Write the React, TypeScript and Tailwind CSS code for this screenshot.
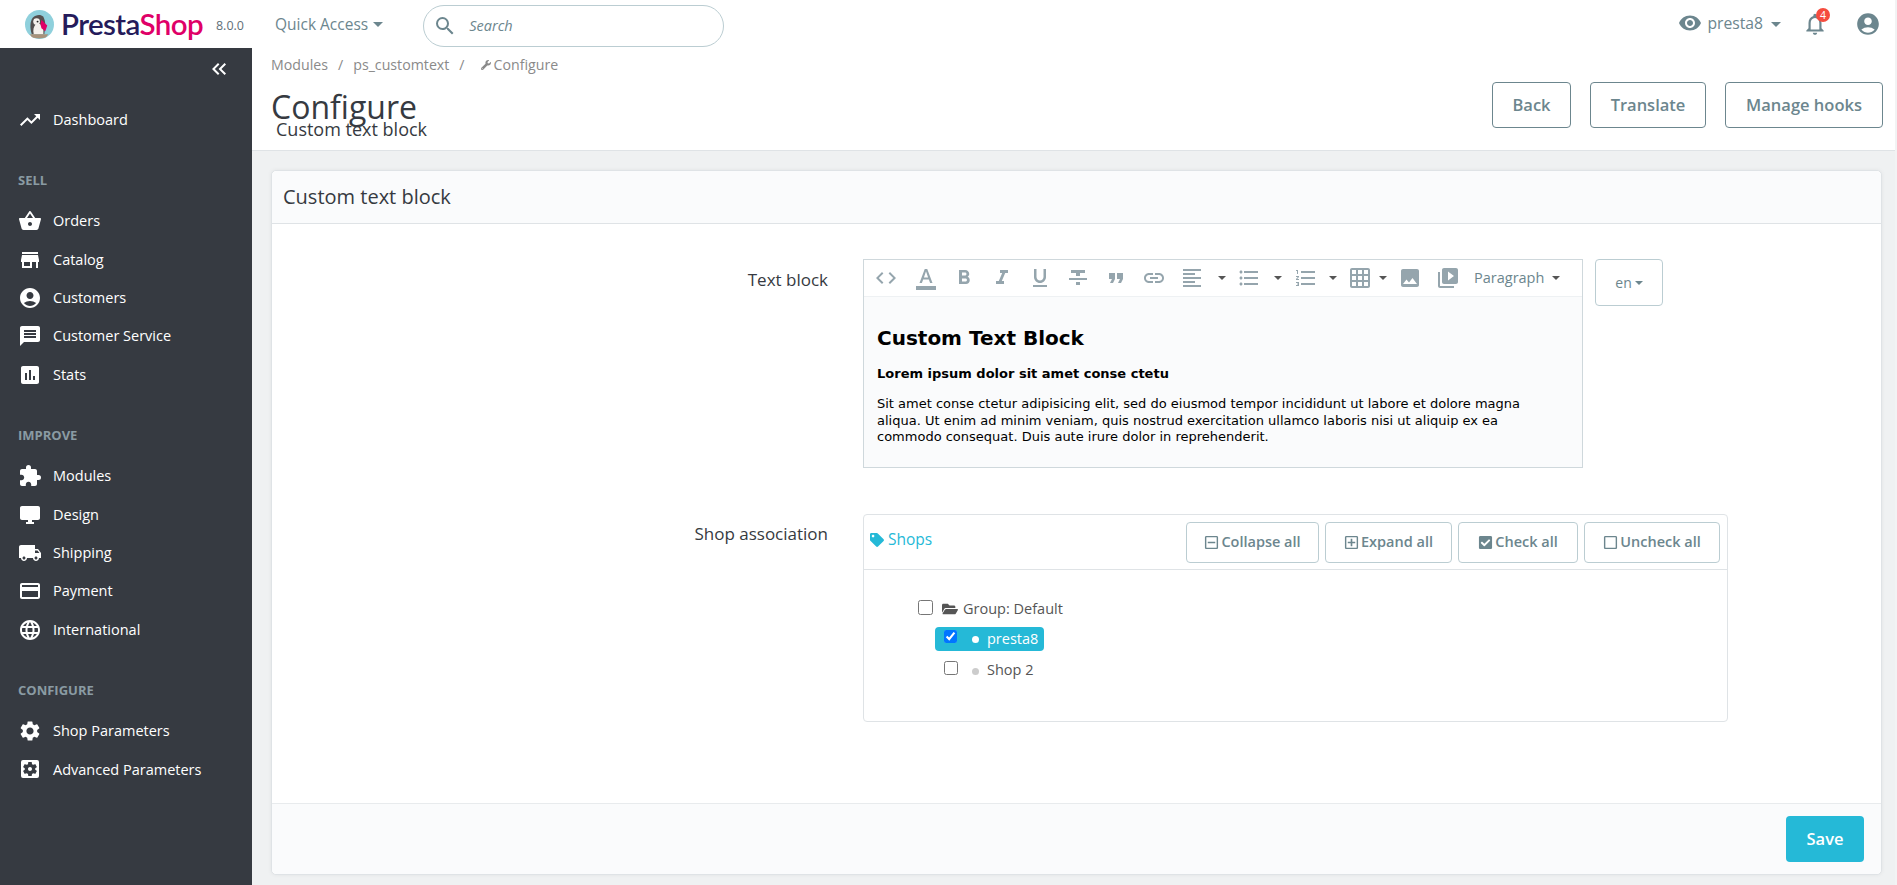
import {
  MdTrendingUp, MdShoppingBasket, MdStore, MdAccountCircle, MdMessage, MdAssessment, MdExtension,
  MdDesktopWindows, MdLocalShipping, MdPayment, MdLanguage, MdSettings, MdSettingsApplications,
  MdVisibility, MdNotificationsNone, MdSearch, MdCode, MdFormatColorText, MdFormatBold, MdFormatItalic,
  MdFormatUnderlined, MdFormatQuote, MdLink, MdFormatAlignLeft, MdFormatListBulleted,
  MdFormatListNumbered, MdGridOn, MdImage, MdVideoLibrary, MdKeyboardDoubleArrowLeft,
} from "react-icons/md";
import { FaTag, FaFolderOpen, FaRegMinusSquare, FaRegPlusSquare, FaCheckSquare, FaRegSquare, FaWrench } from "react-icons/fa";

const menu = [
  { title: "SELL", items: [["Orders", MdShoppingBasket], ["Catalog", MdStore], ["Customers", MdAccountCircle], ["Customer Service", MdMessage], ["Stats", MdAssessment]] },
  { title: "IMPROVE", items: [["Modules", MdExtension], ["Design", MdDesktopWindows], ["Shipping", MdLocalShipping], ["Payment", MdPayment], ["International", MdLanguage]] },
  { title: "CONFIGURE", items: [["Shop Parameters", MdSettings], ["Advanced Parameters", MdSettingsApplications]] },
] as const;

function Caret({ className = "" }: { className?: string }) {
  return <span className={`inline-block w-0 h-0 border-x-[4px] border-x-transparent border-t-[4px] ${className}`} />;
}

// material format_strikethrough, the md set only ships the S variant
function StrikeIcon({ style }: { style?: React.CSSProperties }) {
  return (
    <svg viewBox="0 0 24 24" width="1em" height="1em" fill="currentColor" style={style}>
      <path d="M10 19h4v-3h-4v3zM5 4v3h5v3h4V7h5V4H5zM3 14h18v-2H3v2z" />
    </svg>
  );
}

function Logo() {
  return (
    <svg width="29" height="29" viewBox="0 0 30 30" className="shrink-0">
      <circle cx="15" cy="15" r="15" fill="#8fd0dc" />
      <path d="M7 25c-2-6-2-13 1-17 3-3 8-4 11-1 1 2 2 5 2 9l-1 9z" fill="#55504f" />
      <path d="M9 25c-1-4 0-8 2-10 3-2 7 0 8 4v6z" fill="#f5f1ec" />
      <circle cx="12" cy="12" r="3.5" fill="#f5f1ec" />
      <circle cx="13" cy="12" r="1" fill="#222" />
      <path d="M17 10l6 6-2 6-4-3-1-4z" fill="#df0067" />
      <path d="M5 25h19l-2 3c-4 2-11 2-15 0z" fill="#a8927a" />
    </svg>
  );
}

function Header() {
  return (
    <header className="h-12 bg-white flex items-center shrink-0 relative">
      <div className="ml-[25px] flex items-center w-[250px]">
        <Logo />
        <span className="ml-[7px] text-[29.5px] leading-none font-semibold tracking-[-0.6px] font-['Lato',sans-serif]">
          <span className="text-[#251b5b]">Presta</span><span className="text-[#df0067]">Shop</span>
        </span>
        <span className="ml-[13px] mt-[4px] text-[12.5px] text-[#5f6f78]">8.0.0</span>
      </div>
      <div className="flex items-center gap-[5px] mt-[1px] text-[15.5px] text-[#6c868e]">
        Quick Access <Caret className="border-t-[#6c868e] border-x-[5px] border-t-[5px]" />
      </div>
      <div className="ml-[40px] mt-[3px] w-[301px] h-[42px] border border-[#bbcdd2] rounded-[21px] flex items-center pl-[9px] bg-white">
        <MdSearch className="text-[#6c868e] text-[24px]" />
        <span className="ml-[12px] text-[14.5px] italic text-[#6c868e]">Search</span>
      </div>
      <div className="ml-auto mr-[14px] flex items-center text-[#6c868e]">
        <MdVisibility className="text-[24px] -mt-[3px]" />
        <span className="ml-[5px] text-[15.7px]">presta8</span>
        <Caret className="ml-[8px] border-t-[#6c868e] border-x-[5px] border-t-[5px]" />
        <div className="relative ml-[21px]">
          <MdNotificationsNone className="text-[26px]" />
          <span className="absolute -top-[3px] left-[14px] w-[14px] h-[14px] rounded-full bg-[#f54c3e] text-white text-[10.5px] leading-[14px] text-center">4</span>
        </div>
        <MdAccountCircle className="ml-[27px] text-[26px]" />
      </div>
    </header>
  );
}

function Sidebar() {
  return (
    <aside className="w-[252px] shrink-0 bg-[#363a41] text-white flex flex-col">
      <div className="h-[40px] flex items-center justify-end pr-[21px] pt-[2px]">
        <MdKeyboardDoubleArrowLeft className="text-[24px]" />
      </div>
      <div className="flex items-center h-[38px] pl-[18px] mt-[13px] text-[14.5px]">
        <MdTrendingUp className="text-[24px] w-[24px]" />
        <span className="ml-[11px]">Dashboard</span>
      </div>
      {menu.map((group) => (
        <div key={group.title} className="mt-[22px]">
          <div className="h-[40px] mb-[1px] pl-[18px] flex items-center text-[13px] font-bold text-[#8a9ba3]">{group.title}</div>
          {group.items.map(([label, Icon]) => (
            <div key={label} className="flex items-center h-[38.4px] pl-[18px] text-[14.5px]">
              <Icon className="text-[24px] w-[24px]" />
              <span className="ml-[11px]">{label}</span>
            </div>
          ))}
        </div>
      ))}
    </aside>
  );
}

function ToolBtn({ icon: Icon, caret, width = 38 }: { icon: any; caret?: string; width?: number }) {
  return (
    <div style={{ width }} className="flex items-center text-[#95a5ad] shrink-0">
      <div className="w-[38px] flex justify-center shrink-0">
        <Icon style={{ fontSize: 24 }} />
      </div>
      {caret !== undefined && <Caret className={`border-t-[#555] ${caret}`} />}
    </div>
  );
}

function TextBlock() {
  return (
    <div className="flex">
      <div className="w-[720px] border border-[#cfd8dc] h-[209px] flex flex-col">
        <div className="h-[37px] shrink-0 flex items-center pl-[3px] border-b border-[#eef1f3] bg-white">
          <ToolBtn icon={MdCode} width={40} />
          <ToolBtn icon={MdFormatColorText} />
          <ToolBtn icon={MdFormatBold} />
          <ToolBtn icon={MdFormatItalic} />
          <ToolBtn icon={MdFormatUnderlined} />
          <ToolBtn icon={StrikeIcon} />
          <ToolBtn icon={MdFormatQuote} />
          <ToolBtn icon={MdLink} />
          <ToolBtn icon={MdFormatAlignLeft} caret="ml-[7px]" width={57} />
          <ToolBtn icon={MdFormatListBulleted} caret="ml-[6px]" width={57} />
          <ToolBtn icon={MdFormatListNumbered} caret="ml-[4px]" width={54} />
          <ToolBtn icon={MdGridOn} caret="" width={50} />
          <ToolBtn icon={MdImage} />
          <ToolBtn icon={MdVideoLibrary} />
          <div className="flex items-center text-[14.5px] text-[#6c868e] ml-[7px] -mt-[1px]">
            Paragraph <Caret className="ml-[8px] border-t-[#555]" />
          </div>
        </div>
        <div className="grow bg-[#fafbfc] pl-[13px] pr-[20px] pt-[29px] text-black font-['DejaVu_Sans',sans-serif] text-[13px] leading-[16.4px]">
          <h2 className="text-[20px] leading-[24px] font-bold">Custom Text Block</h2>
          <p className="mt-[16px] font-bold">Lorem ipsum dolor sit amet conse ctetu</p>
          <p className="mt-[14px]">Sit amet conse ctetur adipisicing elit, sed do eiusmod tempor incididunt ut labore et dolore magna aliqua. Ut enim ad minim veniam, quis nostrud exercitation ullamco laboris nisi ut aliquip ex ea commodo consequat. Duis aute irure dolor in reprehenderit.</p>
        </div>
      </div>
      <div className="ml-[12px] w-[68px] h-[47px] border border-[#bbcdd2] rounded-[4px] flex items-center justify-center gap-[3px] text-[14px] text-[#6c868e]">
        en <Caret className="border-t-[#6c868e]" />
      </div>
    </div>
  );
}

function TreeButton({ icon: Icon, label, width }: { icon: any; label: string; width: number }) {
  return (
    <div style={{ width }} className="h-[41px] border border-[#bbcdd2] rounded-[4px] flex items-center justify-center gap-[2px] text-[14.5px] font-semibold text-[#6c868e]">
      <Icon className="text-[15px]" />
      {label}
    </div>
  );
}

function ShopTree() {
  return (
    <div className="w-[865px] h-[208px] border border-[#dfe3e6] rounded-[4px]">
      <div className="h-[55px] border-b border-[#dfe3e6] flex items-center pl-[6px] pr-[7px]">
        <FaTag className="text-[#25b9d7] text-[14px] -mt-[4px]" />
        <span className="ml-[4px] -mt-[4px] text-[15.5px] text-[#25b9d7]">Shops</span>
        <div className="ml-auto flex gap-[6px]">
          <TreeButton icon={FaRegMinusSquare} label="Collapse all" width={133} />
          <TreeButton icon={FaRegPlusSquare} label="Expand all" width={127} />
          <TreeButton icon={FaCheckSquare} label="Check all" width={120} />
          <TreeButton icon={FaRegSquare} label="Uncheck all" width={136} />
        </div>
      </div>
      <div className="pl-[54px] pt-[27px] text-[14.5px] text-[#555]">
        <div className="flex items-center h-[24px]">
          <input type="checkbox" readOnly className="-mt-[3px] w-[15px] h-[15px]" />
          <FaFolderOpen className="ml-[9px] text-[16px] text-[#555] -mt-[1px]" />
          <span className="ml-[5px]">Group: Default</span>
        </div>
        <div className="mt-[6px] ml-[17px] w-[109px] h-[24px] rounded-[4px] bg-[#25b9d7] flex items-center text-white">
          <input type="checkbox" checked readOnly className="ml-[9px] -mt-[5px] w-[13px] h-[13px]" />
          <span className="ml-[15px] w-[7px] h-[7px] rounded-full bg-white" />
          <span className="ml-[8px]">presta8</span>
        </div>
        <div className="mt-[7px] ml-[26px] h-[24px] flex items-center">
          <input type="checkbox" readOnly className="-mt-[5px] w-[14px] h-[14px]" />
          <span className="ml-[14px] w-[7px] h-[7px] rounded-full bg-[#ccc] mt-[2px]" />
          <span className="ml-[8px]">Shop 2</span>
        </div>
      </div>
    </div>
  );
}

export default function App() {
  return (
    <div className="w-[1897px] h-[885px] overflow-hidden bg-[#f2f3f4] font-['Open_Sans',sans-serif]">
      <div className="w-[1895px] h-full flex flex-col bg-[#eff1f2]">
        <Header />
        <div className="flex grow min-h-0">
          <Sidebar />
          <main className="grow min-w-0 flex flex-col">
            <div className="h-[103px] bg-white border-b border-[#dfe3e6] shrink-0 flex items-start pl-[19px] pr-[12px]">
              <div className="grow">
                <div className="mt-[6px] text-[14.2px] text-[#8a8a8a] flex items-center">
                  <span>Modules</span><span className="mx-[10px]">/</span>
                  <span>ps_customtext</span><span className="mx-[10px]">/</span>
                  <FaWrench className="text-[10px] ml-[6px] mr-[3px]" /><span>Configure</span>
                </div>
                <h1 className="mt-[14px] text-[32px] leading-[36px] text-[#363a41]">Configure</h1>
                <div className="-mt-[7px] ml-[5px] text-[18px] leading-[22px] text-[#363a41]">Custom text block</div>
              </div>
              <div className="flex gap-[19px] mt-[34px]">
                {[["Back", 79], ["Translate", 116], ["Manage hooks", 158]].map(([label, w]) => (
                  <div key={label} style={{ width: w as number }} className="h-[46px] border border-[#6c868e] rounded-[4px] flex items-center justify-center text-[16.5px] font-semibold text-[#6c868e]">{label}</div>
                ))}
              </div>
            </div>
            <section className="ml-[19px] mr-[13px] mt-[19px] h-[705px] bg-white border border-[#dfe3e6] rounded-[5px] shadow-[0_0_4px_rgba(0,0,0,0.06)] flex flex-col">
              <div className="h-[53px] shrink-0 bg-[#fafbfc] border-b border-[#dfe3e6] flex items-center pl-[11px] pb-[1px] text-[20px] font-medium text-[#363a41] rounded-t-[5px]">Custom text block</div>
              <div className="grow pt-[35px]">
                <div className="flex">
                  <div className="w-[556px] text-right text-[17px] text-[#363a41] pt-[8px]">Text block</div>
                  <div className="ml-[35px]"><TextBlock /></div>
                </div>
                <div className="flex mt-[46px]">
                  <div className="w-[556px] text-right text-[17px] text-[#363a41] pt-[7px]">Shop association</div>
                  <div className="ml-[35px]"><ShopTree /></div>
                </div>
              </div>
              <div className="h-[71px] shrink-0 bg-[#fafbfc] border-t border-[#e8ebed] rounded-b-[5px] flex items-center justify-end pr-[17px]">
                <div className="w-[78px] h-[46px] rounded-[4px] bg-[#25b9d7] text-white text-[16.5px] font-semibold flex items-center justify-center">Save</div>
              </div>
            </section>
          </main>
        </div>
      </div>
    </div>
  );
}
